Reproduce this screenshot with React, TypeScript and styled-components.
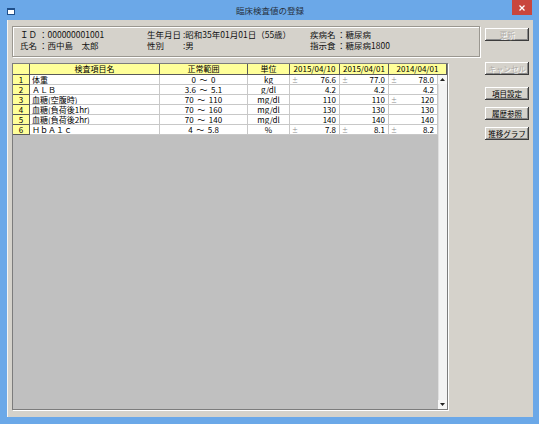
import styled, { createGlobalStyle } from "styled-components";

type Value = { text: string; mark?: boolean };
type Row = { name: string; range: string; unit: string; values: Value[] };

const rows: Row[] = [
  { name: "体重", range: "0  ～  0", unit: "kg", values: [{ text: "76.6", mark: true }, { text: "77.0", mark: true }, { text: "78.0", mark: true }] },
  { name: "ＡＬＢ", range: "3.6  ～  5.1", unit: "g/dl", values: [{ text: "4.2" }, { text: "4.2" }, { text: "4.2" }] },
  { name: "血糖(空腹時)", range: "70  ～  110", unit: "mg/dl", values: [{ text: "110" }, { text: "110" }, { text: "120", mark: true }] },
  { name: "血糖(負荷後1hr)", range: "70  ～  160", unit: "mg/dl", values: [{ text: "130" }, { text: "130" }, { text: "130" }] },
  { name: "血糖(負荷後2hr)", range: "70  ～  140", unit: "mg/dl", values: [{ text: "140" }, { text: "140" }, { text: "140" }] },
  { name: "ＨｂＡ１ｃ", range: "4  ～  5.8", unit: "%", values: [{ text: "7.8", mark: true }, { text: "8.1", mark: true }, { text: "8.2", mark: true }] },
];

const dates = ["2015/04/10", "2015/04/01", "2014/04/01"];

const GlobalStyle = createGlobalStyle`
  html, body {
    margin: 0;
    padding: 0;
  }
  body {
    width: 539px;
    height: 424px;
    overflow: hidden;
    font-family: "Noto Sans CJK JP", "Noto Sans", sans-serif;
  }
`;

const Frame = styled.div`
  width: 539px;
  height: 424px;
  box-sizing: border-box;
  background: #6ba8e8;
  display: flex;
  flex-direction: column;
  padding: 0 6px 7px 7px;
`;

const TitleBar = styled.div`
  height: 20px;
  display: grid;
  grid-template-columns: 1fr auto 1fr;
  align-items: start;
`;

const AppIcon = styled.svg`
  margin-top: 8px;
`;

const Title = styled.div`
  font-size: 8.5px;
  line-height: 20px;
  color: #26303c;
`;

const CloseButton = styled.div`
  justify-self: end;
  margin-right: 1px;
  width: 20px;
  height: 15px;
  background: #c9463d;
  display: flex;
  align-items: center;
  justify-content: center;
`;

const Client = styled.div`
  flex: 1;
  background: #d5d2cb;
  display: flex;
  gap: 5px;
  padding: 6px 0 0 5px;
  box-shadow: inset 1px 0 0 #f4f4f4;
`;

const LeftPane = styled.div`
  width: 468px;
  display: flex;
  flex-direction: column;
  gap: 6px;
`;

const InfoPanel = styled.div`
  height: 31px;
  box-sizing: border-box;
  border: 1px solid #9a9790;
  box-shadow: inset 1px 1px 0 #fff, 1px 1px 0 #fff;
  padding: 2px 0 0 7px;
  display: grid;
  grid-template-columns: 19px 108px 36px 127px 27px auto;
  grid-auto-rows: 11px;
  font-size: 8.5px;
  line-height: 11px;
  color: #111;
  white-space: nowrap;
`;

const Grid = styled.div`
  height: 347px;
  width: 436px;
  box-sizing: border-box;
  border: 1px solid #7c7c7c;
  box-shadow: 1px 1px 0 #fff;
  background: #c0c0c0;
  display: flex;
  flex-direction: column;
  font-size: 8px;
  line-height: 9px;
  color: #000;
  white-space: nowrap;
`;

const HeaderRow = styled.div`
  display: grid;
  grid-template-columns: 17px 130px 88px 42px 50px 49px 58px;
  height: 11px;
`;

const HeadCell = styled.div`
  box-sizing: border-box;
  background: #ffff99;
  border-right: 1px solid #5a5a5a;
  border-bottom: 1px solid #5a5a5a;
  text-align: center;
  line-height: 10px;
`;

const Body = styled.div`
  flex: 1;
  display: flex;
  min-height: 0;
`;

const RowsArea = styled.div`
  width: 425px;
  display: flex;
  flex-direction: column;
`;

const DataRow = styled.div`
  display: grid;
  grid-template-columns: 17px 130px 88px 42px 50px 49px 49px;
  height: 10px;
`;

const NumCell = styled.div`
  box-sizing: border-box;
  background: #ffff99;
  border-right: 1px solid #5a5a5a;
  border-bottom: 1px solid #5a5a5a;
  text-align: center;
  line-height: 9px;
`;

const Cell = styled.div<{ $align?: "left" | "center" | "right" }>`
  box-sizing: border-box;
  background: #fff;
  border-right: 1px solid #c8c8c8;
  border-bottom: 1px solid #c8c8c8;
  text-align: ${(p) => p.$align || "left"};
  padding: 0 ${(p) => (p.$align === "right" ? "3px" : "0")} 0 ${(p) => (p.$align === "left" ? "2px" : "0")};
  line-height: 9px;
  white-space: pre;
  overflow: hidden;
`;

const ValueCell = styled(Cell)`
  display: flex;
  justify-content: space-between;
  padding: 0 3px 0 2px;
`;

const Mark = styled.span<{ $shown: boolean }>`
  font-size: 6px;
  color: #8a8a8a;
  visibility: ${(p) => (p.$shown ? "visible" : "hidden")};
`;

const ScrollBar = styled.div`
  width: 9px;
  background: #f3f3f3;
  display: flex;
  flex-direction: column;
  justify-content: space-between;
  box-shadow: inset 1px 0 0 #e0e0e0;
`;

const ScrollArrow = styled.div`
  height: 9px;
  display: flex;
  align-items: center;
  justify-content: center;
  background: #f7f7f7;
`;

const RightPane = styled.div`
  width: 44px;
  display: flex;
  flex-direction: column;
  padding-top: 2px;
`;

const Button = styled.button<{ $gap: number }>`
  width: 44px;
  height: 13px;
  margin: ${(p) => p.$gap}px 0 0;
  padding: 0;
  border: none;
  background: #d5d2cb;
  box-shadow: inset -1px -1px 0 #3c3c3c, inset 1px 1px 0 #fff, inset -2px -2px 0 #8a8a8a;
  font-family: "Noto Sans CJK JP", sans-serif;
  font-size: 7.5px;
  line-height: 12px;
  color: ${(p) => (p.disabled ? "#b0ada8" : "#000")};
  text-shadow: ${(p) => (p.disabled ? "1px 1px 0 #fff" : "none")};
`;

export default function App() {
  return (
    <>
      <GlobalStyle />
      <Frame>
        <TitleBar>
          <AppIcon width="8" height="7" viewBox="0 0 8 7">
            <rect x="0" y="0" width="8" height="7" fill="#1f4f8a" />
            <rect x="1" y="2" width="6" height="4" fill="#ffffff" />
          </AppIcon>
          <Title>臨床検査値の登録</Title>
          <CloseButton>
            <svg width="6" height="6" viewBox="0 0 6 6">
              <path d="M0.5 0.5 L5.5 5.5 M5.5 0.5 L0.5 5.5" stroke="#fff" strokeWidth="1.3" />
            </svg>
          </CloseButton>
        </TitleBar>
        <Client>
          <LeftPane>
            <InfoPanel>
              <span>ＩＤ</span>
              <span>：000000001001</span>
              <span>生年月日</span>
              <span>:昭和35年01月01日（55歳）</span>
              <span>疾病名</span>
              <span>：糖尿病</span>
              <span>氏名</span>
              <span>：西中島　太郎</span>
              <span>性別</span>
              <span>:男</span>
              <span>指示食</span>
              <span>：糖尿病1800</span>
            </InfoPanel>
            <Grid>
              <HeaderRow>
                <HeadCell />
                <HeadCell>検査項目名</HeadCell>
                <HeadCell>正常範囲</HeadCell>
                <HeadCell>単位</HeadCell>
                {dates.map((d) => (
                  <HeadCell key={d}>{d}</HeadCell>
                ))}
              </HeaderRow>
              <Body>
                <RowsArea>
                  {rows.map((r, i) => (
                    <DataRow key={r.name}>
                      <NumCell>{i + 1}</NumCell>
                      <Cell $align="left">{r.name}</Cell>
                      <Cell $align="center">{r.range}</Cell>
                      <Cell $align="center">{r.unit}</Cell>
                      {r.values.map((v, j) => (
                        <ValueCell key={j}>
                          <Mark $shown={!!v.mark}>±</Mark>
                          <span>{v.text}</span>
                        </ValueCell>
                      ))}
                    </DataRow>
                  ))}
                </RowsArea>
                <ScrollBar>
                  <ScrollArrow>
                    <svg width="5" height="3" viewBox="0 0 5 3">
                      <path d="M2.5 0 L5 3 L0 3 Z" fill="#222" />
                    </svg>
                  </ScrollArrow>
                  <ScrollArrow>
                    <svg width="5" height="3" viewBox="0 0 5 3">
                      <path d="M0 0 L5 0 L2.5 3 Z" fill="#222" />
                    </svg>
                  </ScrollArrow>
                </ScrollBar>
              </Body>
            </Grid>
          </LeftPane>
          <RightPane>
            <Button $gap={0} disabled>更新</Button>
            <Button $gap={21} disabled>キャンセル</Button>
            <Button $gap={12}>項目設定</Button>
            <Button $gap={7}>履歴参照</Button>
            <Button $gap={7}>推移グラフ</Button>
          </RightPane>
        </Client>
      </Frame>
    </>
  );
}
